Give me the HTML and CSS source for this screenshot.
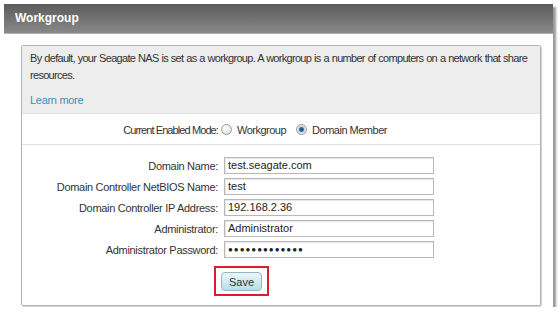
FILE: index.html
```html
<!DOCTYPE html>
<html>

<head>
    <title>Workgroup</title>
    <link rel="stylesheet" href="styles.css">
</head>

<body>
    <div class="window">
        <div class="titlebar">Workgroup</div>
        <div class="content">
            <div class="panel">
                <div class="info">
                    <p>By default, your Seagate NAS is set as a workgroup. A workgroup is a number of computers on a network that share resources.</p>
                    <a href="#" class="learn">Learn more</a>
                </div>

                <div class="mode form-row">
                    <span class="label">Current Enabled Mode:</span>
                    <span class="radios">
                        <label><span class="radio"></span>Workgroup</label>
                        <label><span class="radio checked"></span>Domain Member</label>
                    </span>
                </div>

                <div class="fields">
                    <div class="form-row">
                        <span class="label">Domain Name:</span>
                        <span class="field">test.seagate.com</span>
                    </div>
                    <div class="form-row">
                        <span class="label">Domain Controller NetBIOS Name:</span>
                        <span class="field">test</span>
                    </div>
                    <div class="form-row">
                        <span class="label">Domain Controller IP Address:</span>
                        <span class="field">192.168.2.36</span>
                    </div>
                    <div class="form-row">
                        <span class="label">Administrator:</span>
                        <span class="field">Administrator</span>
                    </div>
                    <div class="form-row">
                        <span class="label">Administrator Password:</span>
                        <span class="field dots">&#9679;&#9679;&#9679;&#9679;&#9679;&#9679;&#9679;&#9679;&#9679;&#9679;&#9679;&#9679;&#9679;</span>
                    </div>
                    <div class="form-row">
                        <span></span>
                        <span class="save-box"><button class="save">Save</button></span>
                    </div>
                </div>
            </div>
        </div>
    </div>
</body>

</html>
```

FILE: styles.css
```css
body {
    margin: 0;
    background: white;
    font-family: "Liberation Sans", Arial, sans-serif;
    font-size: 11px;
    color: #333;
}

.window {
    margin: 4px 0 0 4px;
    width: 549px;
    height: 303px;
    background: white;
    box-shadow: 3px 3px 2px #9a9a9a;
}

.titlebar {
    height: 29px;
    line-height: 28px;
    padding-left: 11px;
    background: linear-gradient(#5c5c5c, #888888);
    border-bottom: 1px solid #b5b5b5;
    color: white;
    font-weight: bold;
    font-size: 12px;
}

.content {
    padding: 11px 12px 0 17px;
}

.panel {
    height: 259px;
    border: 1px solid #b4b4b4;
    box-shadow: 1px 1px 1px #cfcfcf;
    border-radius: 2px;
}

.info {
    background: #ededed;
    padding: 4px 8px 6px 8px;
    height: 57px;
    border-bottom: 1px solid #e2e2e2;
}

.info p {
    margin: 0;
    line-height: 17px;
    letter-spacing: -0.7px;
    word-spacing: 0.5px;
}

.learn {
    display: block;
    margin-top: 10px;
    color: #3f8fb8;
    text-decoration: none;
    letter-spacing: -0.3px;
}

.form-row {
    display: grid;
    grid-template-columns: 196px 210px;
    column-gap: 6px;
    align-items: center;
}

.label {
    text-align: right;
    letter-spacing: -0.3px;
}

.mode {
    height: 29px;
    padding-top: 1px;
    border-bottom: 1px solid #e0e0e0;
}

.mode .label {
    letter-spacing: -0.9px;
}

.radios {
    display: flex;
    gap: 10px;
    margin-left: -3px;
    letter-spacing: -0.5px;
}

.radios label {
    display: flex;
    align-items: center;
    gap: 5px;
}

.radio {
    width: 9px;
    height: 9px;
    border-radius: 50%;
    border: 1px solid #9c9c9c;
    background: radial-gradient(circle at 40% 35%, #ffffff, #d6d6d6);
}

.radio.checked {
    background: radial-gradient(circle, #1f4f7a 0, #2f6e9e 2px, #c8d8e4 3px, #eeeeee 5px);
}

.fields {
    padding-top: 12px;
    display: flex;
    flex-direction: column;
    gap: 4px;
}

.field {
    height: 15px;
    line-height: 15px;
    border: 1px solid #b8b8b8;
    padding-left: 3px;
    color: #222;
    font-size: 11px;
    box-shadow: inset 1px 1px 1px #e6e6e6;
}

.dots {
    font-size: 8px;
    letter-spacing: 1px;
}

.save-box {
    justify-self: start;
    margin: 4px 0 0 -10px;
    border: 2px solid #d6202c;
    padding: 4px 5px 3px 5px;
}

.save {
    display: block;
    width: 41px;
    height: 19px;
    padding: 0;
    font-family: "Liberation Sans", Arial, sans-serif;
    font-size: 11px;
    color: #333;
    border: 1px solid #9bb4bc;
    border-radius: 4px;
    background: linear-gradient(#eaf7fa, #b6dfe8);
}
```
